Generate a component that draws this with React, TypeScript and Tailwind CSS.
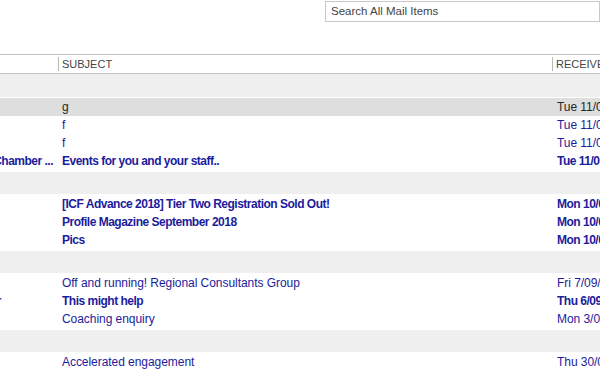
import React from "react";

type Row = {
  from?: string;
  fromPr?: number;
  subject: string;
  date: string;
  bold?: boolean;
  selected?: boolean;
};

const groups: { rows: Row[] }[] = [
  {
    rows: [
      { subject: "g", date: "Tue 11/09/2018", selected: true },
      { subject: "f", date: "Tue 11/09/2018" },
      { subject: "f", date: "Tue 11/09/2018" },
      { from: "Sunshine Chamber ...", fromPr: 9, subject: "Events for you and your staff..", date: "Tue 11/09/2018", bold: true },
    ],
  },
  {
    rows: [
      { subject: "[ICF Advance 2018] Tier Two Registration Sold Out!", date: "Mon 10/09/2018", bold: true },
      { subject: "Profile Magazine September 2018", date: "Mon 10/09/2018", bold: true },
      { subject: "Pics", date: "Mon 10/09/2018", bold: true },
    ],
  },
  {
    rows: [
      { subject: "Off and running! Regional Consultants Group", date: "Fri 7/09/2018" },
      { from: "Coaching Trainer", fromPr: 61, subject: "This might help", date: "Thu 6/09/2018", bold: true },
      { subject: "Coaching enquiry", date: "Mon 3/09/2018" },
    ],
  },
  {
    rows: [{ from: "Sarah Jo", fromPr: 62, subject: "Accelerated engagement", date: "Thu 30/08/2018" }],
  },
];

const font = { fontFamily: '"Liberation Sans", Arial, sans-serif' };

function MailRow({ r }: { r: Row }) {
  const color = r.selected ? "text-[#262626]" : "text-[#1c1c9c]";
  return (
    <div
      className={`flex h-[18px] items-center text-[12px] leading-[17px] ${r.selected ? "bg-[#dedede]" : "bg-white"} ${color} ${r.bold ? "font-bold tracking-[-0.5px]" : "tracking-[-0.05px]"}`}
    >
      <div className="flex w-[62px] shrink-0 justify-end overflow-hidden" style={{ paddingRight: r.fromPr ?? 0 }}>
        {r.from && <span className="shrink-0 whitespace-nowrap">{r.from}</span>}
      </div>
      <div className="w-[495px] shrink-0 overflow-hidden whitespace-nowrap">{r.subject}</div>
      <div className="flex-1 overflow-hidden whitespace-nowrap">{r.date}</div>
    </div>
  );
}

export default function App() {
  return (
    <div className="h-[377px] w-[600px] overflow-hidden bg-white" style={font}>
      <div className="h-[54px] pl-[325px] pt-px">
        <div className="flex h-[21px] items-center border border-[#c8c8c8] pl-[5px] text-[11.5px] text-[#444]">
          Search All Mail Items
        </div>
      </div>
      <div className="flex h-[20px] items-center border-y border-[#c3c3c3] text-[11px] text-[#444]">
        <div className="w-[58px] shrink-0" />
        <div className="flex w-[494px] shrink-0 items-center">
          <span className="mr-[3px] h-[14px] w-px bg-[#b9b9b9]" />
          SUBJECT
        </div>
        <div className="flex flex-1 items-center whitespace-nowrap">
          <span className="mr-[3px] h-[14px] w-px bg-[#b9b9b9]" />
          RECEIVED
        </div>
      </div>
      {groups.map((g, i) => (
        <div key={i} className={i === 0 ? "pb-px" : "py-px"}>
          <div className={`${i === 0 ? "h-[23px]" : "h-[22px]"} bg-[#efefef]`} />
          <div className="pt-px">
            {g.rows.map((r, j) => (
              <MailRow key={j} r={r} />
            ))}
          </div>
        </div>
      ))}
    </div>
  );
}
